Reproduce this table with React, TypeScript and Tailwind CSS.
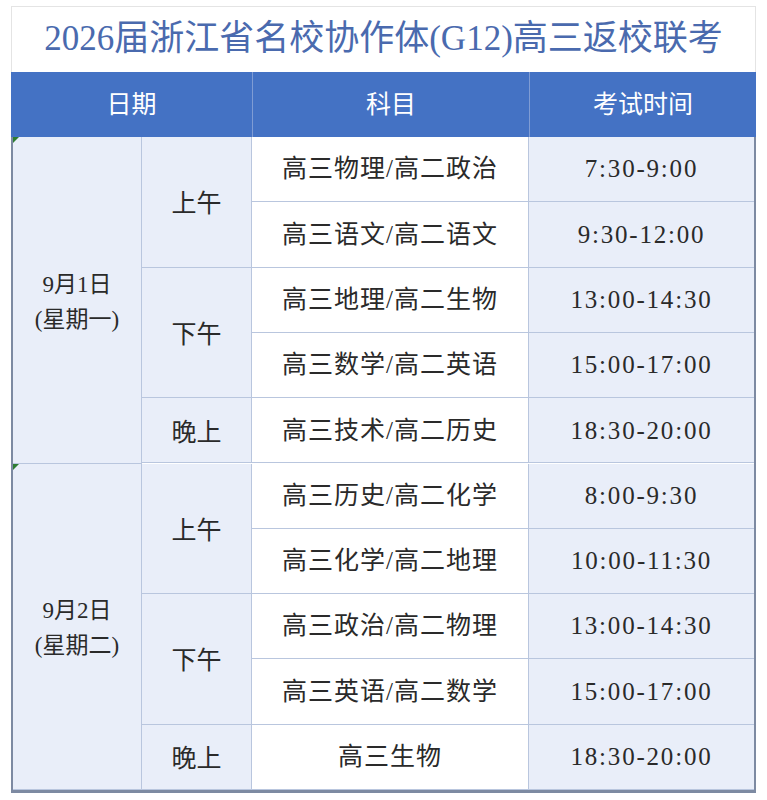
const font = { fontFamily: '"Liberation Serif", "Noto Sans CJK SC", serif' };

type Row = { subject: string; time: string };

const days: { date: string; week: string; periods: { label: string; rows: Row[] }[] }[] = [
  {
    date: '9月1日',
    week: '(星期一)',
    periods: [
      { label: '上午', rows: [{ subject: '高三物理/高二政治', time: '7:30-9:00' }, { subject: '高三语文/高二语文', time: '9:30-12:00' }] },
      { label: '下午', rows: [{ subject: '高三地理/高二生物', time: '13:00-14:30' }, { subject: '高三数学/高二英语', time: '15:00-17:00' }] },
      { label: '晚上', rows: [{ subject: '高三技术/高二历史', time: '18:30-20:00' }] },
    ],
  },
  {
    date: '9月2日',
    week: '(星期二)',
    periods: [
      { label: '上午', rows: [{ subject: '高三历史/高二化学', time: '8:00-9:30' }, { subject: '高三化学/高二地理', time: '10:00-11:30' }] },
      { label: '下午', rows: [{ subject: '高三政治/高二物理', time: '13:00-14:30' }, { subject: '高三英语/高二数学', time: '15:00-17:00' }] },
      { label: '晚上', rows: [{ subject: '高三生物', time: '18:30-20:00' }] },
    ],
  },
];

const cell = 'flex items-center justify-center border-r border-b border-[#b9c6de]';

function DayBlock({ day }: { day: (typeof days)[number] }) {
  const total = day.periods.reduce((n, p) => n + p.rows.length, 0);
  return (
    <div className="flex">
      {/* date column */}
      <div
        className={`${cell} relative w-[131px] flex-col bg-[#e9eef9] pt-[4px] text-[23px] leading-[35px] text-[#2a2a2a]`}
        style={{ height: total * 65.3 }}
      >
        <span className="absolute left-0 top-0 h-0 w-0 border-t-[6px] border-r-[6px] border-t-[#2e7d32] border-r-transparent" />
        <span>{day.date}</span>
        <span>{day.week}</span>
      </div>
      <div className="flex flex-col">
        {day.periods.map((p) => (
          <div key={p.label} className="flex">
            <div
              className={`${cell} w-[110px] bg-[#e9eef9] pt-[4px] text-[25px] text-[#2a2a2a]`}
              style={{ height: p.rows.length * 65.3 }}
            >
              {p.label}
            </div>
            <div className="flex flex-col">
              {p.rows.map((r) => (
                <div key={r.subject} className="flex h-[65.3px]">
                  <div className={`${cell} w-[277px] bg-white text-[25px] tracking-[1px] text-[#2a2a2a]`}>{r.subject}</div>
                  <div className={`${cell} w-[225px] border-r-0 bg-[#e9eef9] text-[25px] tracking-[1.8px] text-[#2a2a2a]`}>
                    {r.time}
                  </div>
                </div>
              ))}
            </div>
          </div>
        ))}
      </div>
    </div>
  );
}

export default function App() {
  return (
    <div className="min-h-[800px] bg-white px-[11px] pt-[6px]" style={font}>
      <div className="w-[745px]">
        {/* Title */}
        <div className="flex h-[66px] items-center justify-center border border-b-0 border-[#e4e4e4] text-[35px] text-[#4a6aae]">
          2026届浙江省名校协作体(G12)高三返校联考
        </div>

        {/* Header */}
        <div className="flex h-[65px] bg-[#4472c4] text-[25px] text-white">
          <div className="flex w-[242px] items-center justify-center border-r border-[#7f9cd4]">日期</div>
          <div className="flex w-[277px] items-center justify-center border-r border-[#7f9cd4]">科目</div>
          <div className="flex flex-1 items-center justify-center">考试时间</div>
        </div>

        {/* Body */}
        <div className="border-b-[3px] border-l-2 border-r-2 border-[#7d8aa2]">
          {days.map((d) => (
            <DayBlock key={d.date} day={d} />
          ))}
        </div>
      </div>
    </div>
  );
}
